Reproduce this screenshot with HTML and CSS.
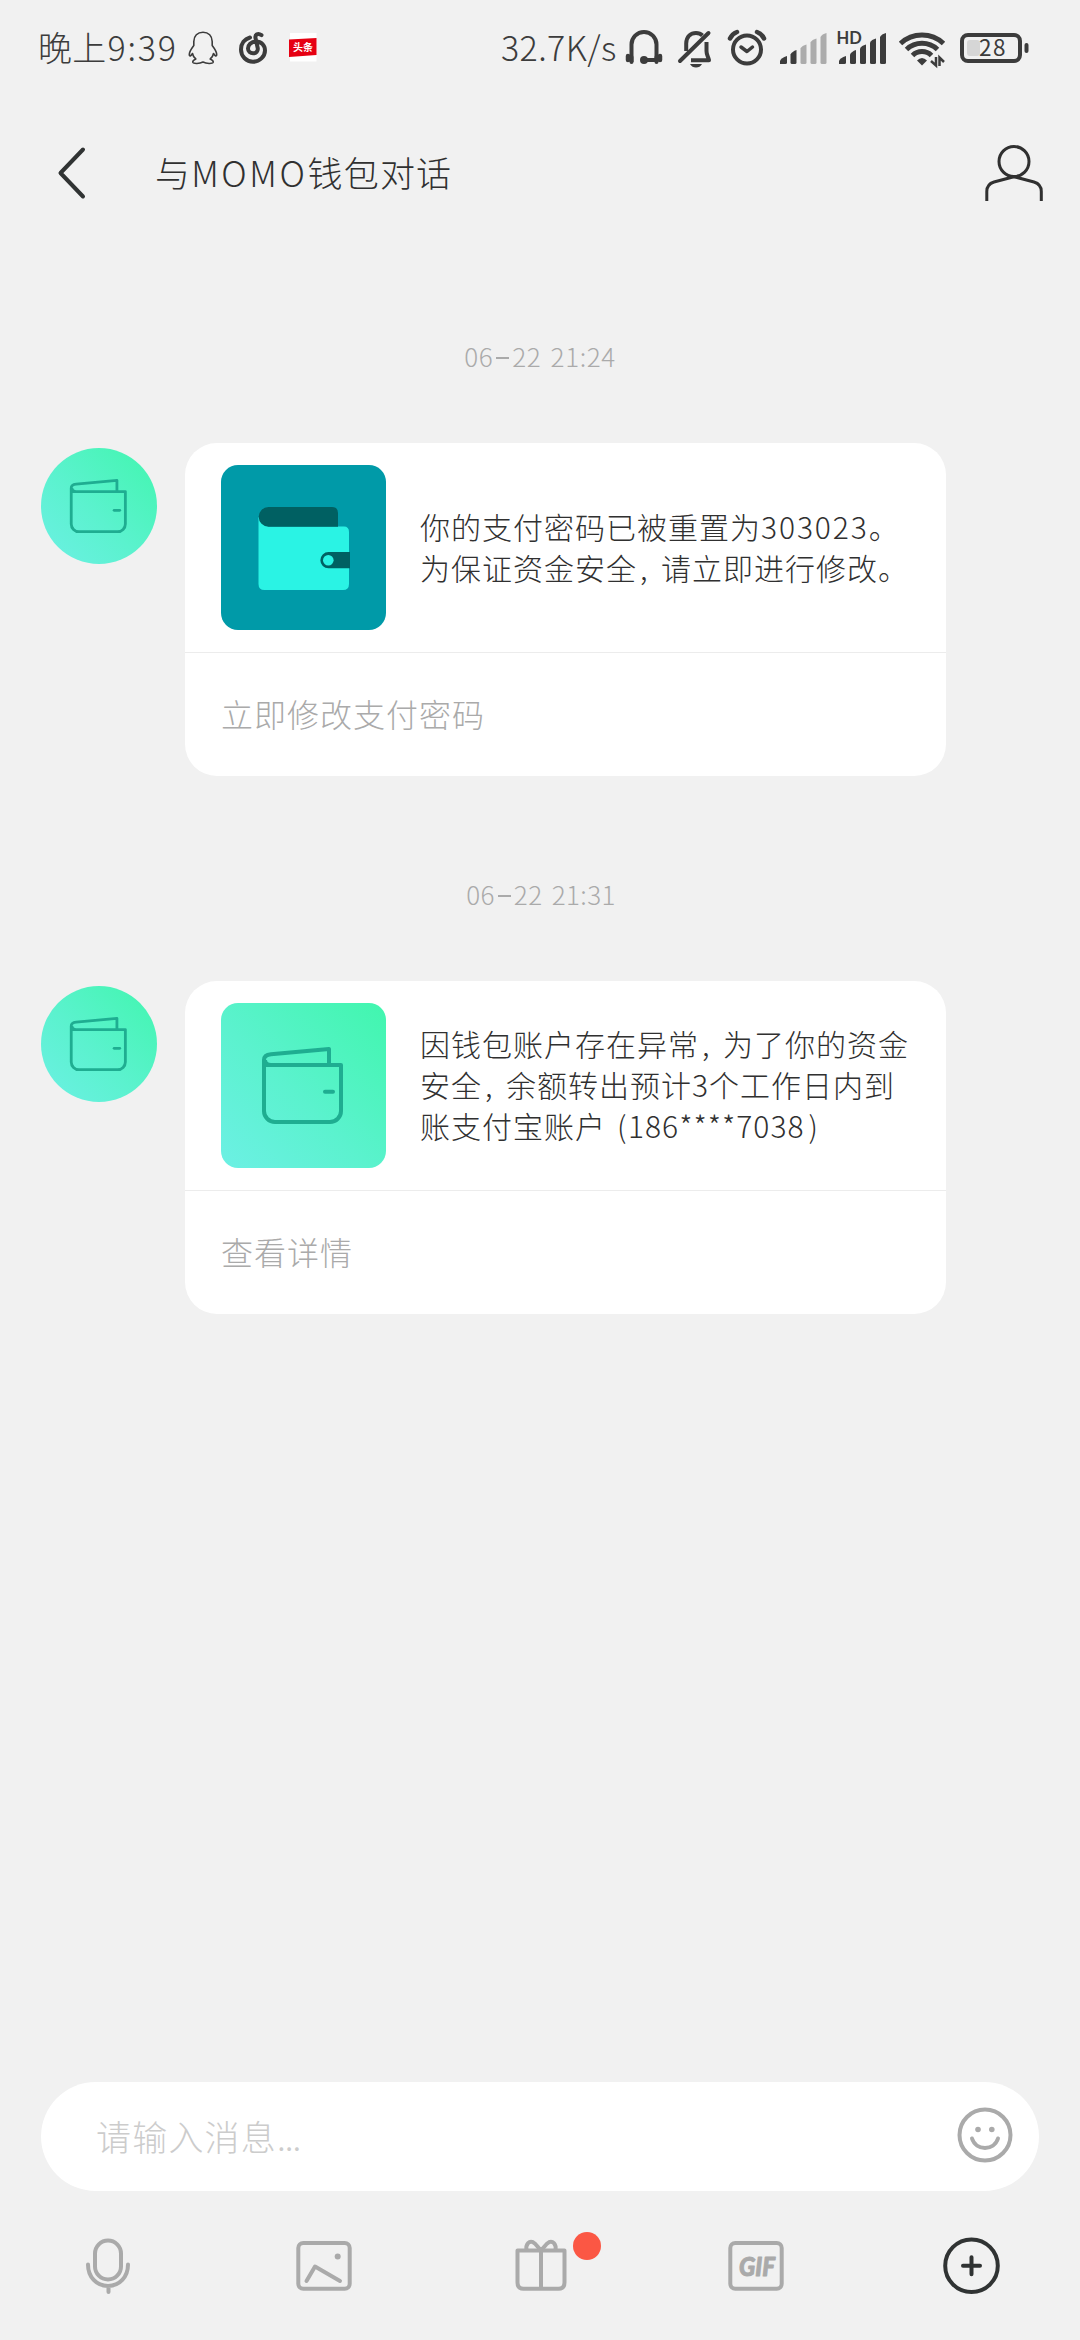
FILE: index.html
```html
<!DOCTYPE html>
<html lang="zh-CN">
<head>
<meta charset="utf-8">
<title>与MOMO钱包对话</title>
<link rel="stylesheet" href="styles.css">
</head>
<body>
<svg class="defs" width="0" height="0">
  <symbol id="wallet" viewBox="0 0 165 165">
    <g fill="none" stroke="#1fad91" stroke-width="4" stroke-linejoin="round">
      <path d="M43 62H120V108A11 11 0 0 1 109 119H54A11 11 0 0 1 43 108V57Q43 52 50 51.300L108 46V62M44 57Q44 62 50 62"/>
      <path d="M104 88.700H112" stroke-linecap="round"/>
    </g>
  </symbol>
</svg>
<div class="screen">
  <div class="status">
    <div class="status-left">
      <span class="clock">晚上<span class="clock-digits">9:39</span></span>
      <svg class="qq" width="30" height="34" viewBox="0 0 30 34" fill="none" stroke="#3c3c3c" stroke-width="1.600" stroke-linejoin="round"><path d="M15 1.200C9.500 1.200 5.800 5 5.800 10.500V14.500C3.500 17.500 1 21.500 1.300 24C1.600 26 3.400 24.500 4.500 22.500C5 25 6.200 26.800 7.800 28C5.500 29 4.500 30 4.800 31.200C5.600 33 11.500 32.800 15 31C18.500 32.800 24.400 33 25.200 31.200C25.500 30 24.500 29 22.200 28C23.800 26.800 25 25 25.500 22.500C26.600 24.500 28.400 26 28.700 24C29 21.500 26.500 17.500 24.200 14.500V10.500C24.200 5 20.500 1.200 15 1.200Z"/></svg>
      <svg class="netease" width="28" height="32" viewBox="0 0 28 32" fill="none" stroke="#3c3c3c" stroke-width="4" stroke-linecap="round"><path d="M11 5.500C5.500 7 2 11.500 2 17.500C2 24.500 7.500 29.800 14 29.800S26 24.500 26 18.500C26 13.500 22.500 9.500 17 9.500C12 9.500 9 13 9 16.500C9 19.500 11.500 21.300 14 21.300C17 21.300 19.300 19 18.700 16L16.500 6C15.800 2.500 19 .800 22.500 3.200"/></svg>
      <svg class="toutiao" width="28" height="29" viewBox="0 0 28 29"><path fill="#fff" d="M1 0H27.500V28.500H1Z"/><path fill="#e60012" d="M0 6.500L27.500 5V22L0 24Z"/><text x="4" y="18" font-size="10" font-weight="700" fill="#fff">头条</text></svg>
    </div>
    <div class="status-right">
      <span class="speed">32.7K/s</span>
      <svg class="head" width="38" height="36" viewBox="0 0 38 36" fill="none" stroke="#3c3c3c" stroke-width="4"><path d="M6.500 33V15.500A12.500 12.500 0 0 1 31.500 15.500V33M19 31H31"/><path stroke-width="4.500" stroke-linecap="round" d="M3 27V31M35 27V31"/><circle cx="19" cy="31" r="4" fill="#3c3c3c" stroke="none"/><path stroke-linecap="round" d="M6.500 33V28M31.500 33V28"/></svg>
      <svg class="bell" width="36" height="38" viewBox="0 0 36 38" fill="none" stroke="#3c3c3c" stroke-width="4"><path stroke-linecap="round" d="M2 31L30.500 3"/><path d="M8.200 21V13.500C8.500 6 13 3 18 3Q22 3 24.500 5.500"/><path d="M13 30.300H31C30 26 28.500 25 28.500 21V12" stroke-linejoin="round"/><path fill="#3c3c3c" stroke="none" d="M12 34H24Q22 37.500 18 37.500T12 34Z"/></svg>
      <svg class="alarm" width="40" height="37" viewBox="0 0 40 37" fill="none" stroke="#3c3c3c" stroke-width="4"><circle cx="20" cy="20.500" r="14"/><path d="M14 18L20 22.500L25.500 18" stroke-linecap="round" stroke-linejoin="round" stroke-width="3.500"/><path stroke-linecap="round" stroke-width="4.500" d="M3 9.500Q5 5 10 3M37 9.500Q35 5 30 3"/></svg>
      <svg class="sig" width="48" height="31" viewBox="0 0 48 31"><g fill="#3c3c3c"><path d="M0 31V28Q1 25 7 23V29.500Q7 31 5.500 31Z"/><path d="M10.500 29.500V21.500Q12 18.500 16.500 17V29.500Q16.500 31 15 31H12Q10.500 31 10.500 29.500Z"/></g><g fill="#acacac"><path d="M20.500 29.500V15.500Q22 12.500 26.500 11.500V29.500Q26.500 31 25 31H22Q20.500 31 20.500 29.500Z"/><path d="M30.500 29.500V9.500Q32 6.500 36.500 5.500V29.500Q36.500 31 35 31H32Q30.500 31 30.500 29.500Z"/><path d="M40.500 29.500V4Q42 1 46.500 0V29.500Q46.500 31 45 31H42Q40.500 31 40.500 29.500Z"/></g></svg>
      <svg class="sighd" width="50" height="32" viewBox="0 0 50 32" fill="#3c3c3c"><text x="-.500" y="12" font-size="16.500" font-weight="700" class="hd">HD</text><g transform="translate(2 1)"><path d="M0 31V28Q1 25 7 23V29.500Q7 31 5.500 31Z"/><path d="M11 29.500V21.500Q12.500 18.500 17 17V29.500Q17 31 15.500 31H12.500Q11 31 11 29.500Z"/><path d="M21 29.500V15.500Q22.500 12.500 27 11.500V29.500Q27 31 25.500 31H22.500Q21 31 21 29.500Z"/><path d="M31 29.500V9.500Q32.500 6.500 37 5.500V29.500Q37 31 35.500 31H32.500Q31 31 31 29.500Z"/><path d="M41 29.500V4Q42.500 1 47 0V29.500Q47 31 45.500 31H42.500Q41 31 41 29.500Z"/></g></svg>
      <svg class="wifi" width="46" height="36" viewBox="0 0 46 36" fill="none" stroke="#3c3c3c" stroke-width="5"><path d="M1.500 12.500A31.500 31.500 0 0 1 44.500 12.500M7.500 18.500A22.500 22.500 0 0 1 38.500 18.500M13.500 24.500A13.500 13.500 0 0 1 32.500 24.500"/><path fill="#3c3c3c" stroke="none" d="M18 29.500Q23 24.500 28 29.500L23 34.500Z"/><path stroke-width="2.500" d="M37 26V34.500L32 30M40.500 35V26.500L45 31"/></svg>
      <svg class="batt" width="69" height="30" viewBox="0 0 69 30"><rect x="2" y="2" width="58" height="26" rx="6" fill="none" stroke="#3c3c3c" stroke-width="4"/><rect x="7" y="7" width="13" height="16" rx="3" fill="#d6d6d6"/><rect x="64.500" y="10" width="4" height="10" rx="2" fill="#3c3c3c"/><text x="19" y="23.300" font-size="22.500" font-weight="400" textLength="26.500" fill="#3c3c3c">28</text></svg>
    </div>
  </div>

  <div class="header">
    <svg class="back" width="30" height="54" viewBox="0 0 30 54" fill="none" stroke="#303333" stroke-width="4" stroke-linecap="round" stroke-linejoin="round"><path d="M26 3.500L3.500 27L26 50.500"/></svg>
    <h1 class="title">与<span class="latin">MOMO</span>钱包对话</h1>
    <svg class="person" width="60" height="58" viewBox="0 0 60 58" fill="none" stroke="#303030" stroke-width="3"><circle cx="30" cy="18.500" r="15"/><path d="M2.800 58V48.500C2.800 43.500 5 40.500 10 39L26 34.700Q30 33.400 34 34.700L50 39C55 40.500 57.300 43.500 57.300 48.500V58"/></svg>
  </div>

  <div class="chat">
    <div class="time">06<span class="dash"></span>22 21:24</div>
    <div class="message">
      <div class="avatar"><svg width="116" height="116"><use href="#wallet"/></svg></div>
      <div class="card">
        <div class="card-body">
          <div class="tile teal">
            <svg width="165" height="165" viewBox="0 0 165 165"><path fill="#2af3e4" d="M37.500 52L47 61.500H123Q128 61.500 128 67V119Q128 125 122 125H43.500Q37.500 125 37.500 119Z"/><path fill="#006062" d="M47.500 42H111Q117 42 117 48V61.700H47.500A9.850 9.850 0 0 1 47.500 42ZM107.500 87H129V103.300H107.500A8.150 8.150 0 0 1 107.500 87Z"/><circle cx="107.300" cy="95.200" r="5.300" fill="#2af3e4"/></svg>
          </div>
          <p class="text">你的支付密码已被重置为<span class="code">303023</span>。<br>为保证资金安全<span class="comma">,</span>请立即进行修改。</p>
        </div>
        <div class="card-link">立即修改支付密码</div>
      </div>
    </div>

    <div class="time narrow">06<span class="dash"></span>22 21:31</div>
    <div class="message">
      <div class="avatar"><svg width="116" height="116"><use href="#wallet"/></svg></div>
      <div class="card">
        <div class="card-body">
          <div class="tile mint"><svg width="165" height="165"><use href="#wallet"/></svg></div>
          <p class="text">因钱包账户存在异常<span class="comma">,</span>为了你的资金<br>安全<span class="comma">,</span>余额转出预计3个工作日内到<br>账支付宝账户<span class="paren open">(</span>186****7038<span class="paren close">)</span></p>
        </div>
        <div class="card-link">查看详情</div>
      </div>
    </div>
  </div>

  <div class="composer">
    <div class="input">
      <span class="placeholder">请输入消息<span class="dots">...</span></span>
      <svg width="56" height="56" viewBox="0 0 56 56" fill="none" stroke="#aaa" stroke-width="4"><circle cx="28" cy="28" r="25.500"/><path stroke-linecap="round" d="M15 31.500C19 44 37 44 41 31.500"/><circle cx="21" cy="22.500" r="2.800" fill="#aaa" stroke="none"/><circle cx="34.800" cy="22.500" r="2.800" fill="#aaa" stroke="none"/></svg>
    </div>
    <div class="tools">
      <div class="tool"><svg width="60" height="60" viewBox="0 0 60 60" fill="none" stroke="#aaa" stroke-width="4" stroke-linecap="round"><rect x="17" y="4.500" width="26" height="39" rx="13"/><path d="M10 28.500C10 41 18.500 50 30 50S50 41 50 28.500M30.500 50V56"/></svg></div>
      <div class="tool"><svg width="60" height="60" viewBox="0 0 60 60" fill="none" stroke="#aaa" stroke-width="4" stroke-linecap="round" stroke-linejoin="round"><rect x="4.300" y="7" width="51.400" height="45.700" rx="5"/><path d="M12.500 45L21 30.500L46 45"/><circle cx="43.700" cy="20.500" r="3" fill="#aaa" stroke="none"/></svg></div>
      <div class="tool gift"><svg width="60" height="60" viewBox="0 0 60 60" fill="none" stroke="#aaa" stroke-width="4" stroke-linejoin="round"><path d="M7.500 14.500H54.500V46.500Q54.500 52.700 48.500 52.700H13.500Q7.500 52.700 7.500 46.500ZM31 14.500V52.700"/><path d="M16.500 14.500C15.500 7.500 19.500 4.800 23 6.200C26.500 8 28 12 31 14C34 12 35.500 8 39 6.200C42.500 4.800 46.500 7.500 45.500 14.500"/></svg><i class="badge"></i></div>
      <div class="tool"><svg width="60" height="60" viewBox="0 0 60 60" fill="none" stroke="#aaa" stroke-width="4" stroke-linejoin="round"><rect x="4.300" y="7" width="51.400" height="45.700" rx="5"/><text class="gif" x="13" y="39.500" textLength="36" lengthAdjust="spacingAndGlyphs">GIF</text></svg></div>
      <div class="tool"><svg width="60" height="60" viewBox="0 0 60 60" fill="none" stroke="#303333" stroke-width="4" stroke-linecap="round"><circle cx="29.500" cy="29.700" r="26.300"/><path d="M21 29.700H38M29.500 21.200V38.200"/></svg></div>
    </div>
  </div>
</div>
</body>
</html>
```

FILE: styles.css
```css
* { box-sizing: border-box; margin: 0; padding: 0; }
body {
  background: #f1f1f1;
  color: #303030;
  font-family: "Noto Sans CJK SC", sans-serif;
  font-weight: 300;
}
svg { display: block; flex: none; overflow: visible; }
.defs { position: absolute; }
.screen { width: 1080px; height: 2340px; display: flex; flex-direction: column; overflow: hidden; }

.status { height: 97px; padding: 0 51px 0 38px; display: flex; justify-content: space-between; color: #3c3c3c; white-space: nowrap; }
.status-left, .status-right { display: flex; align-items: flex-start; }
.clock { width: 150px; font-size: 34px; line-height: 50px; padding-top: 22px; letter-spacing: .2px; }
.clock-digits { letter-spacing: 1.8px; margin-left: 1px; }
.speed { width: 124px; font-size: 34px; line-height: 50px; padding-top: 22px; letter-spacing: .4px; }
.qq { margin-top: 31px; }
.netease { margin: 32px 22px 0 21px; }
.toutiao { margin-top: 33px; }
.head { margin-top: 29px; }
.bell { margin: 30px 0 0 15px; }
.alarm { margin: 29px 0 0 13px; }
.sig { margin: 33px 0 0 13px; }
.sighd { margin: 32px 0 0 9px; }
.hd { font-family: Lato, sans-serif; }
.wifi { margin: 31px 0 0 12px; }
.batt { margin: 33px 0 0 15px; }

.header { height: 153px; padding: 0 36px 0 57px; display: flex; align-items: flex-start; }
.back { margin-top: 49px; }
.title { flex: 1; margin-left: 68px; padding-top: 49px; font-size: 35px; font-weight: 300; line-height: 52px; letter-spacing: 1.2px; }
.latin { letter-spacing: 2.6px; }
.person { margin-top: 46px; }

.chat { flex: 1; display: flex; flex-direction: column; }
.time { height: 193px; padding-top: 86px; font-size: 26px; line-height: 40px; letter-spacing: .6px; word-spacing: 3px; color: #aaa; text-align: center; }
.narrow { letter-spacing: .4px; padding-left: 2px; }
.dash { display: inline-block; width: 13px; height: 2px; margin: 0 3px; background: #aaa; vertical-align: 8px; }
.message { display: flex; align-items: flex-start; padding-left: 41px; margin-bottom: 12px; }
.avatar { width: 116px; height: 116px; margin: 5px 28px 0 0; border-radius: 50%; background: linear-gradient(45deg, #6cf0e4, #5bf2ce 45%, #41f6ae); overflow: hidden; }
.card { width: 761px; height: 333px; border-radius: 32px; background: #fff; overflow: hidden; }
.card-body { height: 210px; padding: 0 36px; display: flex; align-items: center; gap: 34px; border-bottom: 1px solid #ececec; }
.tile { width: 165px; height: 165px; flex: none; border-radius: 17px; overflow: hidden; }
.teal { background: #009aa8; }
.mint { background: linear-gradient(45deg, #6cf0e4, #5bf2ce 45%, #41f6ae); }
.text { padding-bottom: 2px; font-size: 30px; line-height: 41px; letter-spacing: 1px; white-space: nowrap; }
.code { letter-spacing: 1.9px; }
.comma { display: inline-block; width: 24px; padding-left: 3px; }
.paren { display: inline-block; width: 22px; }
.open { padding-left: 11px; }
.close { padding-left: 4px; }
.card-link { padding: 36px 36px 0; font-size: 32px; line-height: 48px; letter-spacing: 1px; color: #aaa; }

.composer { height: 258px; }
.input { width: 998px; height: 109px; margin: 0 auto; padding: 0 26px 0 55px; border-radius: 55px; background: #fff; display: flex; align-items: center; justify-content: space-between; }
.placeholder { font-size: 35px; line-height: 52px; letter-spacing: 1.2px; color: #ccc; padding-bottom: 2px; }
.input svg { margin-bottom: 4px; }
.dots { letter-spacing: -1px; }
.tools { display: grid; grid-template-columns: repeat(5, 1fr); padding-top: 45px; }
.tool { display: flex; justify-content: center; }
.gift { position: relative; }
.badge { position: absolute; left: 141px; top: -4px; width: 28px; height: 28px; border-radius: 50%; background: #fb5744; }
.gif { font: italic 900 27px Lato, sans-serif; fill: #aaa; stroke: #aaa; stroke-width: 1px; }
```
